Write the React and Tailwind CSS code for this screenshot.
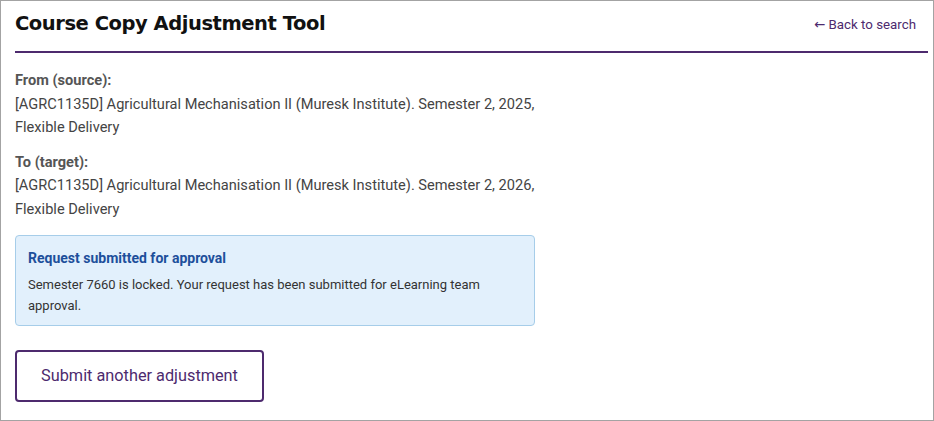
export default function App() {
  const from = '[AGRC1135D] Agricultural Mechanisation II (Muresk Institute). Semester 2, 2025, Flexible Delivery'
  const to = '[AGRC1135D] Agricultural Mechanisation II (Muresk Institute). Semester 2, 2026, Flexible Delivery'

  return (
    <div className="w-[934px] h-[421px] bg-white border border-[#a3a3a3] pl-[14px] pr-[5px] font-['Roboto',sans-serif] overflow-hidden">
      {/* Header */}
      <div className="flex items-center justify-between pt-[9px] pb-[13px] border-b-2 border-[#4d2a6e]">
        <h1 className="text-[19.5px] leading-[28px] font-bold text-[#111] font-['DejaVu_Sans',sans-serif] tracking-[-0.45px]">
          Course Copy Adjustment Tool
        </h1>
        <a href="#" className="text-[13.3px] text-[#4d2a6e] mr-[12px] mt-[1px]">
          <span className="font-['DejaVu_Sans',sans-serif]">←</span> Back to search
        </a>
      </div>

      <div className="w-[524px] mt-[16px] text-[14.6px] leading-[23.5px]">
        <div className="font-bold text-[#555]">From (source):</div>
        <div className="text-[#444]">{from}</div>

        <div className="font-bold text-[#555] mt-[11px]">To (target):</div>
        <div className="text-[#444]">{to}</div>

        {/* Status notice */}
        <div className="w-[520px] mt-[14px] bg-[#e2f0fc] border border-[#a6cde9] rounded-[4px] pl-[12px] pr-3 pt-[12px] pb-[9px]">
          <div className="text-[14px] leading-[20px] font-bold text-[#1d4f9b]">Request submitted for approval</div>
          <div className="mt-[6px] text-[13px] leading-[21px] text-[#333]">
            Semester 7660 is locked. Your request has been submitted for eLearning team approval.
          </div>
        </div>

        <button className="mt-[24px] w-[249px] h-[52px] border-2 border-[#4d2a6e] rounded-[4px] text-[16.3px] text-[#4d2a6e] bg-white">
          Submit another adjustment
        </button>
      </div>
    </div>
  )
}
